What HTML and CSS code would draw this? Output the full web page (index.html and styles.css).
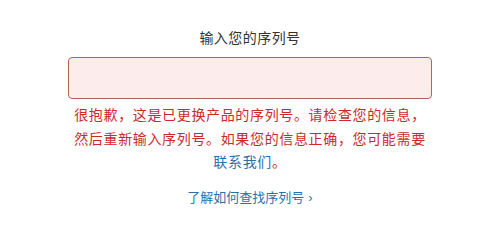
FILE: index.html
```html
<!DOCTYPE html>
<html lang="zh-CN">
<head>
<meta charset="utf-8">
<link rel="stylesheet" href="styles.css">
</head>
<body>
<main class="page">
  <div class="title">输入您的序列号</div>
  <div class="field"></div>
  <p class="error">很抱歉，这是已更换产品的序列号。请检查您的信息，<br>然后重新输入序列号。如果您的信息正确，您可能需要<br><a class="contact" href="#">联系我们</a>。</p>
  <a class="help" href="#">了解如何查找序列号<span class="chev">›</span></a>
</main>
</body>
</html>
```
FILE: styles.css
```css
html, body {
  margin: 0;
  padding: 0;
  background: #ffffff;
}
.page {
  display: flex;
  flex-direction: column;
  align-items: center;
  padding: 27px 0 0 11px;
  font-family: "Noto Sans CJK SC", "Noto Sans", sans-serif;
}
.title {
  font-size: 14px;
  line-height: 20px;
  letter-spacing: 0.45px;
  color: #333333;
}
.field {
  margin-top: 10px;
  width: 362px;
  height: 40px;
  border: 1px solid #b8625c;
  border-radius: 4px;
  background: #fdecec;
}
.error {
  margin: 4px 0 0 0;
  font-size: 14px;
  line-height: 23.5px;
  letter-spacing: 0.65px;
  color: #cc2a2a;
  text-align: center;
}
.contact {
  color: #2d6fa9;
  text-decoration: none;
}
.help {
  margin-top: 13px;
  font-size: 13px;
  line-height: 20px;
  letter-spacing: 0;
  color: #2d6fa9;
  text-decoration: none;
}
.chev {
  font-family: "Liberation Sans", sans-serif;
  font-size: 13px;
  margin-left: 4px;
}
```
